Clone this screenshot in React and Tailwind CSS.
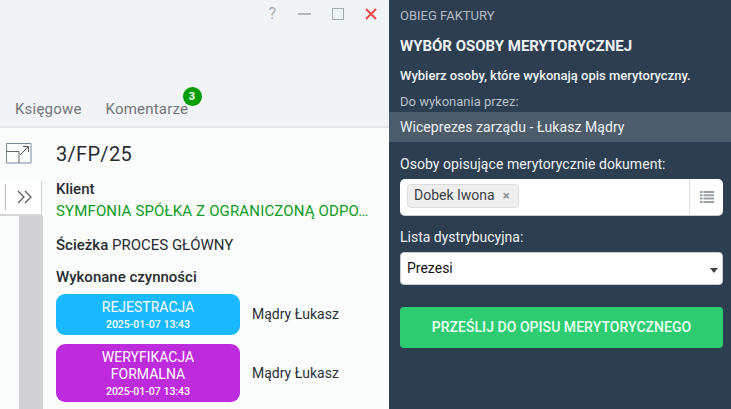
import React from "react";

function Expand() {
  return (
    <svg width="26" height="21" viewBox="0 0 26 21" fill="none" strokeWidth="1">
      <path d="M.5 7V.5h24.500v19.500H.5z" stroke="#7a8a9a" />
      <path d="M.5 8.500h12.500V20" stroke="#666" />
      <path d="M14 12l8-8M17 3.500h5.500V9" stroke="#555" />
    </svg>
  );
}

function Activity({ color, title, h }) {
  return (
    <div className="flex items-center">
      <div className={`w-[184px] ${h} ${color} rounded-[9px] pt-[2px] text-white text-center flex flex-col justify-center`}>
        {title.map((t) => (
          <div key={t} className="text-[14px] leading-[17px]">{t}</div>
        ))}
        <div className="text-[10.5px] leading-[17px] font-medium">2025-01-07 13:43</div>
      </div>
      <div className="ml-3 text-[14px] text-[#2b2f36]">Mądry Łukasz</div>
    </div>
  );
}

export default function App() {
  return (
    <div className="w-[731px] h-[409px] overflow-hidden flex font-['Roboto',sans-serif] bg-white">
      <div className="w-[389px] h-full flex flex-col">
        <div className="h-[128px] shrink-0 bg-[#f1f4f6] border-b-2 border-[#e3e5e7] flex flex-col">
          <div className="flex justify-end items-center h-[28px] pr-[12px]">
            <span className="text-[16px] text-[#a5adb3] mr-[22px]">?</span>
            <svg width="13" height="12" viewBox="0 0 13 12" className="mr-[21px]"><path d="M0 6h13" stroke="#9aa5ab" strokeWidth="1.500" /></svg>
            <svg width="12" height="12" viewBox="0 0 12 12" className="mr-[21px]"><rect x=".5" y=".5" width="11" height="11" fill="none" stroke="#a5aeb0" /></svg>
            <svg width="12" height="12" viewBox="0 0 12 12"><path d="M1 1l10 10M11 1L1 11" stroke="#ef4444" strokeWidth="1.800" /></svg>
          </div>
          <div className="flex-1 flex items-end pl-[15px] pb-[1px] text-[15px] tracking-[0.2px] text-[#74767a]">
            <span className="leading-[32px]">Księgowe</span>
            <span className="relative ml-[24px] leading-[32px]">
              Komentarze
              <span className="absolute left-[77px] -top-[6px] w-[19px] h-[19px] rounded-full bg-[#009d00] text-white text-[11px] font-bold leading-[19px] text-center">3</span>
            </span>
          </div>
        </div>
        <div className="flex-1 flex bg-[#fbfdfd] min-h-0">
          <div className="w-[43px] shrink-0 flex flex-col">
            <div className="h-[52px] flex items-start pt-[15px] pl-[6px]">
              <Expand />
            </div>
            <div className="w-[42px] h-[36px] bg-white border-r border-b-2 border-[#d4d4d6] flex items-center">
              <div className="w-px h-[26px] bg-[#bcbcbc] ml-[5px]" />
              <svg width="16" height="14" viewBox="0 0 16 14" fill="none" stroke="#555" strokeWidth="1.200" className="ml-[11px]">
                <path d="M1 1l6 6-6 6M8 1l6 6-6 6" />
              </svg>
            </div>
            <div className="flex-1 ml-[19px] bg-[#d1d1d3]" />
          </div>
          <div className="pl-[13px] flex-1 min-w-0 text-[#282b30]">
            <div className="text-[20px] leading-[24px] mt-[14px] tracking-[0.3px]">3/FP/25</div>
            <div className="mt-[14px] text-[15px] leading-[18px] font-medium">Klient</div>
            <div className="mt-[4px] whitespace-nowrap text-[15px] leading-[18px] tracking-[0.15px] text-[#0d9b21]">SYMFONIA SPÓŁKA Z OGRANICZONĄ ODPO…</div>
            <div className="mt-[16px] text-[15px] leading-[18px]"><span className="font-medium">Ścieżka</span> PROCES GŁÓWNY</div>
            <div className="mt-[14px] text-[15px] leading-[18px] font-medium">Wykonane czynności</div>
            <div className="mt-[8px] flex flex-col gap-[9px]">
              <Activity color="bg-[#18b9ff]" title={["REJESTRACJA"]} h="h-[41px]" />
              <Activity color="bg-[#be2bdc]" title={["WERYFIKACJA", "FORMALNA"]} h="h-[58px]" />
            </div>
          </div>
        </div>
      </div>
      <div className="w-[342px] h-full bg-[#2d3e50] pl-[11px] pr-[8px] text-[#eef2f5]">
        <div className="mt-[8px] text-[13px] leading-[16px] text-[#b3bcc4]">OBIEG FAKTURY</div>
        <div className="mt-[13px] text-[15px] leading-[18px] font-bold">WYBÓR OSOBY MERYTORYCZNEJ</div>
        <div className="mt-[13px] text-[13px] leading-[16px] font-medium">Wybierz osoby, które wykonają opis merytoryczny.</div>
        <div className="mt-[10px] text-[13px] leading-[16px] text-[#b8c0c8]">Do wykonania przez:</div>
        <div className="-ml-[11px] -mr-[8px] mt-[2px] h-[30px] pl-[11px] bg-[#4d5c6b] text-[14px] tracking-[0.06px] leading-[30px]">Wiceprezes zarządu - Łukasz Mądry</div>
        <div className="mt-[13px] text-[14px] tracking-[0.05px] leading-[18px]">Osoby opisujące merytorycznie dokument:</div>
        <div className="mt-[6px] w-[323px] h-[37px] bg-white rounded-[5px] border-b border-[#c8ccd0] flex items-stretch">
          <div className="flex-1 pl-[7px] pt-[4px]">
            <div className="inline-flex items-center h-[24px] pl-[6px] pr-[8px] bg-[#eeeeee] border border-[#dcdcdc] rounded-[4px] text-[14px] text-[#3a3f45]">
              Dobek Iwona
              <span className="ml-[8px] text-[#8a8f94] text-[13px] font-bold leading-none">×</span>
            </div>
          </div>
          <div className="w-[34px] border-l border-[#dcdcdc] flex items-center justify-center">
            <svg width="14" height="12" viewBox="0 0 14 12" fill="#9a9fa3">
              <path d="M0 0h2.500v2H0zM3.500 0H14v2H3.500zM0 3.300h2.500v2H0zM3.500 3.300H14v2H3.500zM0 6.600h2.500v2H0zM3.500 6.600H14v2H3.500zM0 10h2.500v2H0zM3.500 10H14v2H3.500z" />
            </svg>
          </div>
        </div>
        <div className="mt-[12px] text-[14px] leading-[18px]">Lista dystrybucyjna:</div>
        <div className="mt-[6px] w-[323px] h-[33px] bg-white rounded-[4px] border border-[#c8ccd0] pl-[6px] pr-[4px] flex items-center justify-between text-[14px] text-[#111]">
          Prezesi
          <svg width="8" height="5" viewBox="0 0 8 5" className="mt-[3px]"><path d="M0 0h8L4 5z" fill="#444" /></svg>
        </div>
        <div className="mt-[22px] w-[323px] h-[41px] bg-[#2ecc71] rounded-[4px] flex items-center justify-center text-[14px] tracking-[0.05px] font-medium text-[#eafff5]">PRZEŚLIJ DO OPISU MERYTORYCZNEGO</div>
      </div>
    </div>
  );
}
